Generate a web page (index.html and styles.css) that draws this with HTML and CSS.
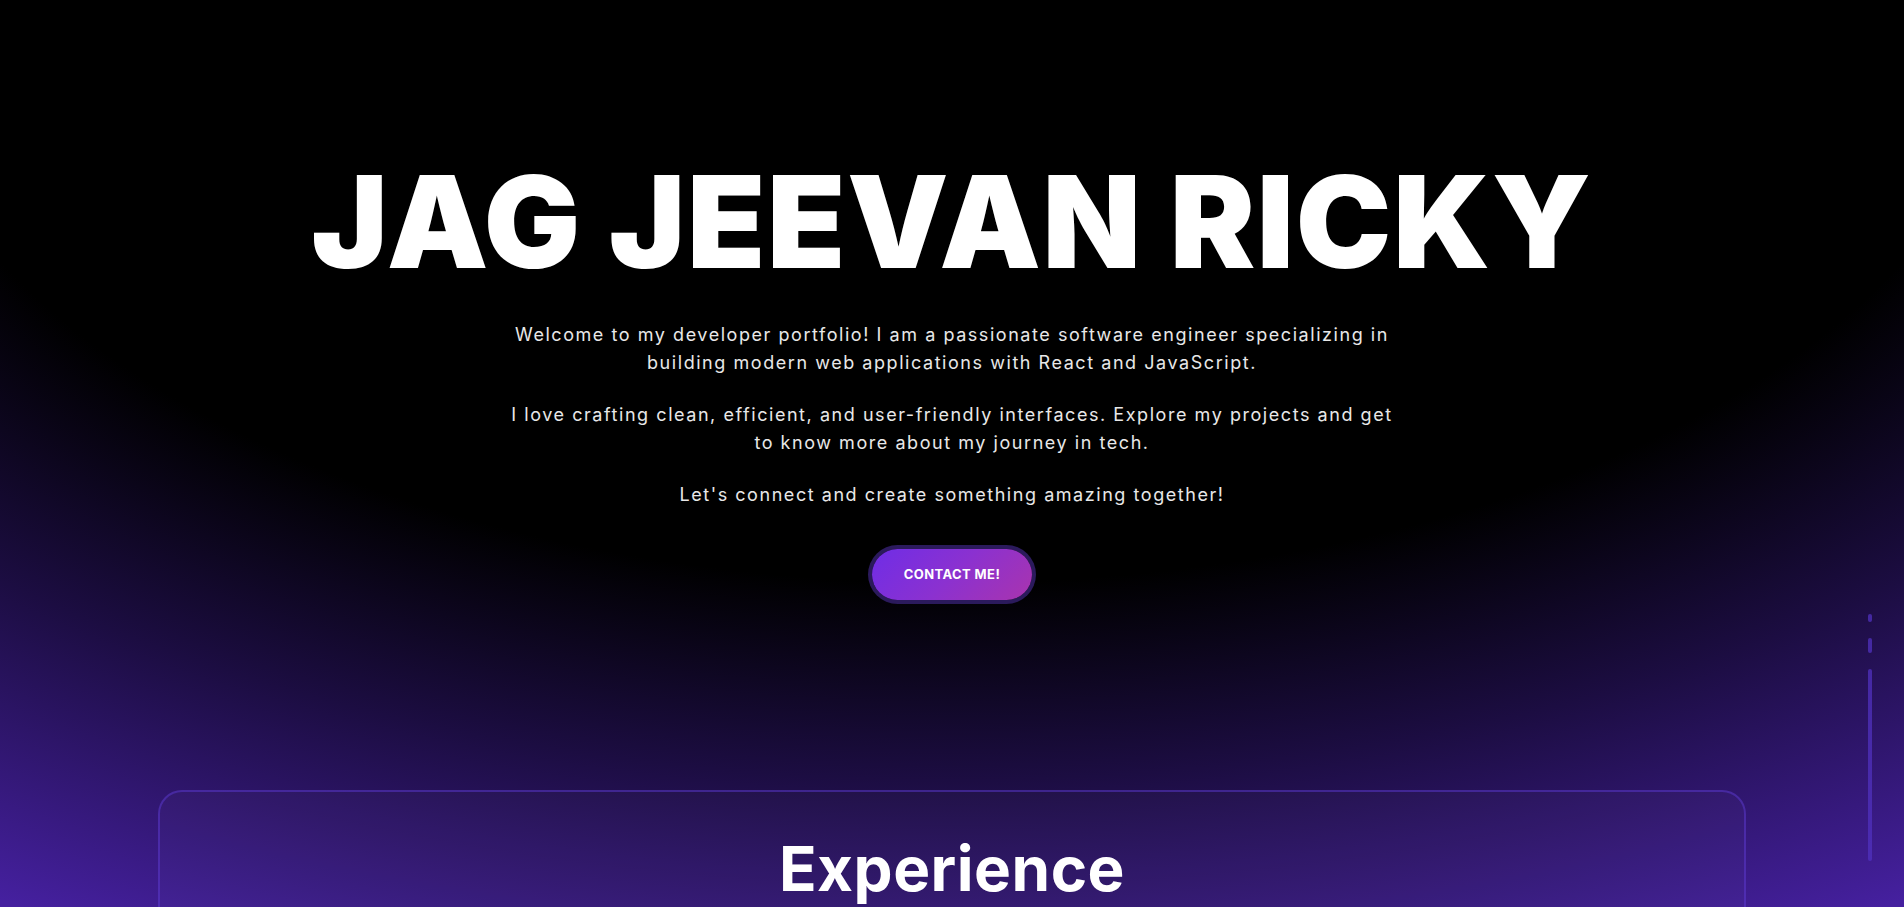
FILE: index.html
```html
<!DOCTYPE html>
<html lang="en">
<head>
<meta charset="utf-8">
<title>Jag Jeevan Ricky — Portfolio</title>
<link rel="stylesheet" href="styles.css">
</head>
<body>
<main class="page">
  <section class="hero">
    <h1 class="hero-title">JAG JEEVAN RICKY</h1>
    <div class="hero-text">
      <p>Welcome to my developer portfolio! I am a passionate software engineer specializing in building modern web applications with React and JavaScript.</p>
      <p>I love crafting clean, efficient, and user-friendly interfaces. Explore my projects and get to know more about my journey in tech.</p>
      <p>Let's connect and create something amazing together!</p>
    </div>
    <a class="btn-contact" href="#contact">CONTACT ME!</a>
  </section>
  <section class="card">
    <h2 class="card-title">Experience</h2>
  </section>
</main>
<div class="scroll-track">
  <span class="seg seg-dot"></span>
  <span class="seg seg-short"></span>
  <span class="seg seg-long"></span>
</div>
</body>
</html>
```
FILE: styles.css
```css
* { box-sizing: border-box; }
html, body { margin: 0; padding: 0; }
body {
  min-height: 100vh;
  background-color: #45209f;
  background-image: radial-gradient(ellipse 1900px 1040px at 50% 0%, #000 56%, #1c0d42 75%, #45209f 100%);
  background-attachment: fixed;
  color: #fff;
  font-family: "Inter", "Liberation Sans", sans-serif;
  overflow: hidden;
}
.page {
  display: flex;
  flex-direction: column;
  align-items: center;
}
.hero {
  display: flex;
  flex-direction: column;
  align-items: center;
  padding-top: 158px;
  width: 100%;
}
.hero-title {
  margin: 0;
  font-weight: 900;
  font-size: 128px;
  line-height: 1;
  letter-spacing: 1.6px;
  color: #fff;
}
.hero-text {
  margin-top: 35px;
  max-width: 890px;
  text-align: center;
  color: #e8e8e8;
  font-size: 18px;
  line-height: 28px;
  letter-spacing: 1.55px;
}
.hero-text p { margin: 0 0 24px; }
.hero-text p:last-child { margin-bottom: 0; }
.btn-contact {
  margin-top: 40px;
  display: inline-block;
  padding: 16px 32px;
  border-radius: 999px;
  background: linear-gradient(135deg, #6f2de6 0%, #8b31d0 50%, #a934ae 100%);
  box-shadow: 0 0 0 4px #2b1a5c;
  color: #fff;
  font-weight: 700;
  font-size: 13px;
  line-height: 19px;
  text-decoration: none;
  letter-spacing: 0.4px;
}
.card {
  margin-top: 190px;
  width: 1588px;
  min-height: 400px;
  border: 2px solid rgba(92, 58, 210, 0.5);
  border-radius: 24px;
  background: rgba(255, 255, 255, 0.02);
  display: flex;
  flex-direction: column;
  align-items: center;
  padding-top: 40px;
}
.card-title {
  margin: 0;
  font-size: 62px;
  font-weight: 700;
  line-height: 1.2;
  letter-spacing: 0.5px;
  color: #fff;
}
.scroll-track {
  position: fixed;
  right: 32px;
  top: 614px;
  display: flex;
  flex-direction: column;
  gap: 16px;
}
.seg {
  display: block;
  width: 4px;
  border-radius: 2px;
  background: rgba(80, 50, 190, 0.75);
}
.seg-dot { height: 8px; }
.seg-short { height: 15px; }
.seg-long { height: 192px; }
```
